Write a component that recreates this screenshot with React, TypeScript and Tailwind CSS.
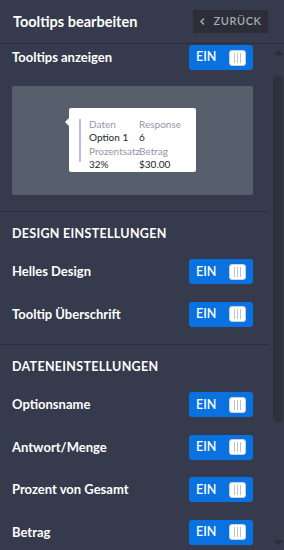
import React from 'react';

const font = { fontFamily: 'Lato, "Open Sans", sans-serif' };

function Toggle() {
  return (
    <div className="flex items-center w-[64px] h-[25px] rounded-[3px] bg-[#0a72e0] pl-[7px] pr-[7px] justify-between">
      <span className="text-white text-[12.5px] font-semibold leading-none">EIN</span>
      <div className="w-[17px] h-[16px] bg-white rounded-[3px] border border-[#c9d3e0] flex items-center justify-center gap-[2px]">
        <span className="w-px h-[10px] bg-[#b9c1cc]" />
        <span className="w-px h-[10px] bg-[#b9c1cc]" />
        <span className="w-px h-[10px] bg-[#b9c1cc]" />
      </div>
    </div>
  );
}

function Row({ label }: { label: string }) {
  return (
    <div className="flex items-center justify-between h-[42.5px]">
      <span className="text-white text-[13px] font-bold">{label}</span>
      <Toggle />
    </div>
  );
}

function Heading({ children }: { children: React.ReactNode }) {
  return (
    <div className="h-[38.5px] pt-[15px]">
      <div className="text-white text-[12.5px] font-bold leading-[14px] tracking-[0.3px]">{children}</div>
    </div>
  );
}

export default function App() {
  return (
    <div className="w-[284px] h-[550px] bg-[#353a4d] overflow-hidden flex flex-col" style={font}>
      {/* Header */}
      <div className="h-[44px] shrink-0 flex items-center justify-between pl-[13px] pr-[16px] border-b border-[#2a2e3c]">
        <span className="text-white text-[14.5px] font-bold">Tooltips bearbeiten</span>
        <button className="w-[75px] h-[23px] bg-[#2b2e39] flex items-center justify-center gap-[6px] text-[#a7abb6] text-[11px] font-semibold tracking-[0.6px]">
          <svg width="8" height="9" viewBox="0 0 8 9">
            <path d="M5 1.5 L2 4.5 L5 7.5" stroke="#a7abb6" strokeWidth="1.5" fill="none" />
          </svg>
          ZURÜCK
        </button>
      </div>

      <div className="flex flex-1 min-h-0">
        {/* Content */}
        <div className="w-[268px] shrink-0">
          <div className="pl-[12px] pr-[15px]">
            <div className="flex items-center justify-between h-[27px]">
              <span className="text-white text-[13px] font-bold">Tooltips anzeigen</span>
              <Toggle />
            </div>
            <div className="mt-[15px] h-[109px] bg-[#585f6c] rounded-[2px] pt-[22px] pl-[57px]">
              <div className="relative w-[127px] h-[64px] bg-white rounded-[2px] flex pt-[11px] pl-[10px]">
                <div className="absolute left-[-4px] top-[10px] w-0 h-0 border-y-[4px] border-y-transparent border-r-[4px] border-r-white" />
                <div className="w-[2px] h-[43px] bg-[#c6b2f6] mr-[8px]" />
                <div className="grid grid-cols-[50px_50px] text-[10px] leading-[11px]">
                  <span className="text-[#9297a6]">Daten</span>
                  <span className="text-[#9297a6]">Response</span>
                  <span className="text-[#1c1f2c]">Option 1</span>
                  <span className="text-[#1c1f2c]">6</span>
                  <span className="text-[#9297a6]">Prozentsatz</span>
                  <span className="text-[#9297a6]">Betrag</span>
                  <span className="text-[#1c1f2c]">32%</span>
                  <span className="text-[#1c1f2c]">$30.00</span>
                </div>
              </div>
            </div>
          </div>

          <div className="mt-[16px] h-px bg-[#2a2e3c]" />
          <div className="pl-[12px] pr-[15px]">
            <Heading>DESIGN EINSTELLUNGEN</Heading>
            <Row label="Helles Design" />
            <Row label="Tooltip Überschrift" />
          </div>

          <div className="mt-[8.5px] h-px bg-[#2a2e3c]" />
          <div className="pl-[12px] pr-[15px]">
            <Heading>DATENEINSTELLUNGEN</Heading>
            <Row label="Optionsname" />
            <Row label="Antwort/Menge" />
            <Row label="Prozent von Gesamt" />
            <Row label="Betrag" />
          </div>
        </div>

        {/* Scrollbar */}
        <div className="flex-1 flex flex-col items-center pl-[4px] pt-[6px] pb-[5px]">
          <svg width="9" height="5" viewBox="0 0 9 5"><path d="M0 5 L4.5 0 L9 5 Z" fill="#2a2e38" /></svg>
          <div className="mt-[20px] w-[10px] h-[348px] rounded-[5px] bg-[#2e323d]" />
          <div className="flex-1" />
          <svg width="9" height="5" viewBox="0 0 9 5"><path d="M0 0 L4.5 5 L9 0 Z" fill="#2a2e38" /></svg>
        </div>
      </div>
    </div>
  );
}
